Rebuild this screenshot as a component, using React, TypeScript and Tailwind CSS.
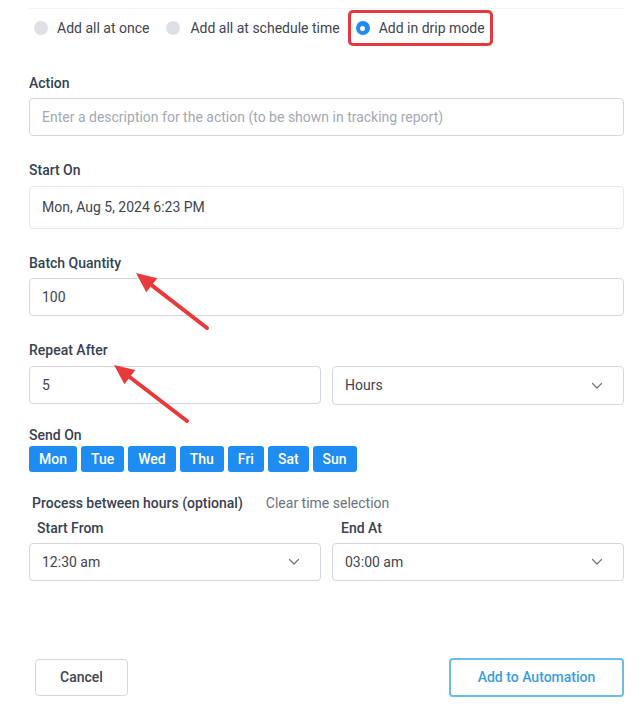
import React from "react";

const Chevron = () => (
  <svg width="12" height="8" viewBox="0 0 12 8" fill="none" stroke="#6b7280" strokeWidth="1.2" strokeLinecap="round" strokeLinejoin="round">
    <path d="M1.5 1.5 L6 6 L10.5 1.5" />
  </svg>
);

const Arrow = ({ x1, y1, x2, y2 }: { x1: number; y1: number; x2: number; y2: number }) => {
  const dx = x1 - x2;
  const dy = y1 - y2;
  const len = Math.sqrt(dx * dx + dy * dy);
  const ux = dx / len;
  const uy = dy / len;
  const hl = 20;
  const hw = 9;
  const bx = x1 - ux * hl;
  const by = y1 - uy * hl;
  const px = -uy;
  const py = ux;
  const p1 = `${x1},${y1}`;
  const p2 = `${bx + px * hw},${by + py * hw}`;
  const p3 = `${bx - px * hw},${by - py * hw}`;
  return (
    <g>
      <line x1={bx + ux * 4} y1={by + uy * 4} x2={x2} y2={y2} stroke="#e8393b" strokeWidth="4" strokeLinecap="round" />
      <polygon points={`${p1} ${p2} ${p3}`} fill="#e8393b" />
    </g>
  );
};

export default function App() {
  const days = ["Mon", "Tue", "Wed", "Thu", "Fri", "Sat", "Sun"];
  return (
    <div
      className="relative w-[644px] h-[721px] bg-white text-[14px] text-[#374151]"
      style={{ fontFamily: "Roboto, 'Liberation Sans', sans-serif" }}
    >
      <div className="pl-[29px] pr-[20px] pt-[8px]">
        <div className="border-t border-[#f1f3f5]" />
        {/* radio row */}
        <div className="flex items-center h-[36px] mt-[1px] pl-[5px] text-[#3f4450]">
          <div className="flex items-center gap-[9px]">
            <span className="w-[14px] h-[14px] rounded-full bg-[#dde0e5]" />
            <span>Add all at once</span>
          </div>
          <div className="flex items-center gap-[10px] ml-[17px]">
            <span className="w-[14px] h-[14px] rounded-full bg-[#dde0e5]" />
            <span>Add all at schedule time</span>
          </div>
          <div className="flex items-center gap-[9px] ml-[8px] h-[36px] border-[3px] border-[#e5383e] rounded-[5px] pl-[5px] pr-[5px]">
            <span className="w-[14px] h-[14px] rounded-full bg-[#1e8cf0] flex items-center justify-center">
              <span className="w-[5px] h-[5px] rounded-full bg-white" />
            </span>
            <span>Add in drip mode</span>
          </div>
        </div>

        {/* Action */}
        <div className="mt-[27px] font-medium leading-[20px]">Action</div>
        <div className="mt-[5px] h-[38px] border border-[#d3d7de] rounded-[4px] flex items-center px-[12px] text-[#a3a9b3]">
          Enter a description for the action (to be shown in tracking report)
        </div>

        {/* Start On */}
        <div className="mt-[24px] font-medium leading-[20px]">Start On</div>
        <div className="mt-[6px] h-[43px] border border-[#e6e8ec] rounded-[4px] flex items-center px-[12px] text-[#3f4450]">
          Mon, Aug 5, 2024 6:23 PM
        </div>

        {/* Batch Quantity */}
        <div className="mt-[24px] font-medium leading-[20px]">Batch Quantity</div>
        <div className="mt-[5px] h-[38px] border border-[#d3d7de] rounded-[4px] flex items-center px-[12px] text-[#3f4450]">
          100
        </div>

        {/* Repeat After */}
        <div className="mt-[24px] font-medium leading-[20px]">Repeat After</div>
        <div className="mt-[6px] grid grid-cols-2 gap-[11px] items-start">
          <div className="h-[38px] border border-[#d3d7de] rounded-[4px] flex items-center px-[12px] text-[#3f4450]">
            5
          </div>
          <div className="h-[39px] border border-[#d3d7de] rounded-[4px] flex items-center justify-between pl-[12px] pr-[20px] text-[#3f4450]">
            <span>Hours</span>
            <Chevron />
          </div>
        </div>

        {/* Send On */}
        <div className="mt-[20px] font-medium leading-[20px]">Send On</div>
        <div className="mt-[1px] flex gap-[4px]">
          {days.map((d) => (
            <div
              key={d}
              className="h-[26px] px-[10px] rounded-[3px] bg-[#1e8cf0] text-white font-medium flex items-center"
            >
              {d}
            </div>
          ))}
        </div>

        {/* Process between hours */}
        <div className="mt-[21px] flex items-center pl-[3px] leading-[20px]">
          <span className="font-medium">Process between hours (optional)</span>
          <span className="ml-[23px] text-[#6b7280]">Clear time selection</span>
        </div>
        <div className="mt-[5px] grid grid-cols-2 gap-[11px] leading-[20px] font-medium">
          <div className="pl-[8px]">Start From</div>
          <div className="pl-[9px]">End At</div>
        </div>
        <div className="mt-[5px] grid grid-cols-2 gap-[11px]">
          <div className="h-[38px] border border-[#d3d7de] rounded-[4px] flex items-center justify-between pl-[12px] pr-[20px] text-[#3f4450]">
            <span>12:30 am</span>
            <Chevron />
          </div>
          <div className="h-[38px] border border-[#d3d7de] rounded-[4px] flex items-center justify-between pl-[12px] pr-[20px] text-[#3f4450]">
            <span>03:00 am</span>
            <Chevron />
          </div>
        </div>

        {/* footer */}
        <div className="mt-[77px] flex items-center justify-between pl-[6px]">
          <div className="w-[93px] h-[37px] border border-[#d3d7de] rounded-[4px] flex items-center justify-center font-medium text-[#3f4450]">
            Cancel
          </div>
          <div className="w-[175px] h-[39px] border-2 border-[#6cbbe8] rounded-[4px] flex items-center justify-center font-medium text-[#3b9de0]">
            Add to Automation
          </div>
        </div>
      </div>

      <svg className="absolute left-0 top-0 pointer-events-none" width="644" height="721">
        <Arrow x1={136} y1={273} x2={207} y2={328} />
        <Arrow x1={114} y1={365} x2={187} y2={421} />
      </svg>
    </div>
  );
}
